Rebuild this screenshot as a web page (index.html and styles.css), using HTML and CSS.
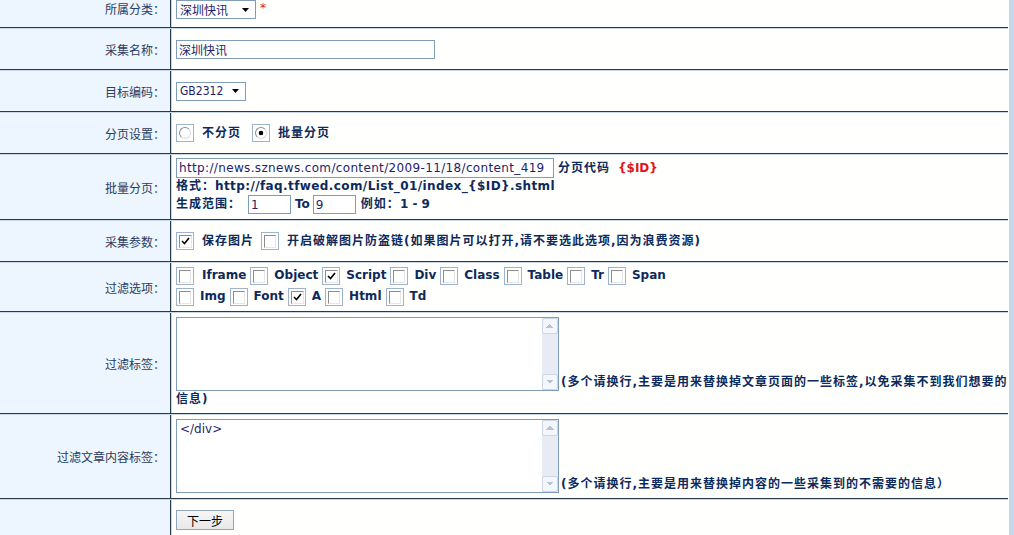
FILE: index.html
```html
<!DOCTYPE html>
<html lang="zh-CN">
<head>
  <meta charset="UTF-8" />
  <title>采集设置</title>
  <link rel="stylesheet" href="styles.css">
</head>
<body>
  <div class="form">
    <div class="row first">
      <div class="label">所属分类：</div>
      <div class="field">
        <span class="select w80"><span class="val">深圳快讯</span><svg class="arrow" width="7" height="4" viewBox="0 0 7 4"><path d="M0 0h7L3.5 4z"/></svg></span>
        <span class="req">*</span>
      </div>
    </div>

    <div class="row">
      <div class="label">采集名称：</div>
      <div class="field">
        <input class="text w259" type="text" value="深圳快讯">
      </div>
    </div>

    <div class="row">
      <div class="label">目标编码：</div>
      <div class="field">
        <span class="select w70"><span class="val latin">GB2312</span><svg class="arrow" width="7" height="4" viewBox="0 0 7 4"><path d="M0 0h7L3.5 4z"/></svg></span>
      </div>
    </div>

    <div class="row">
      <div class="label">分页设置：</div>
      <div class="field wide radios">
        <label class="opt"><span class="box"><i class="radio"></i></span><span class="cn">不分页</span></label>
        <label class="opt"><span class="box"><i class="radio on"></i></span><span class="cn">批量分页</span></label>
      </div>
    </div>

    <div class="row h66">
      <div class="label">批量分页：</div>
      <div class="field stack">
        <div class="line l1">
          <input class="text w378" type="text" value="http://news.sznews.com/content/2009-11/18/content_419">
          <span class="cn">分页代码</span>
          <span class="code">{$ID}</span>
        </div>
        <div class="line l2"><span class="cn">格式：</span><span class="fmt">http://faq.tfwed.com/List_01/index_{$ID}.shtml</span></div>
        <div class="line l3">
          <span class="cn">生成范围：</span>
          <input class="text w43 range" type="text" value="1">
          <span>To</span>
          <input class="text w43" type="text" value="9">
          <span class="eg"><span class="cn">例如：</span>1 - 9</span>
        </div>
      </div>
    </div>

    <div class="row">
      <div class="label">采集参数：</div>
      <div class="field wide">
        <label class="opt"><span class="box"><i class="chk"><svg width="11" height="11" viewBox="0 0 11 11"><path d="M2 5l2.5 2.5L9 2" fill="none" stroke="#000" stroke-width="1.6"/></svg></i></span><span class="cn">保存图片</span></label>
        <label class="opt"><span class="box"><i class="chk"></i></span><span class="cn">开启破解图片防盗链(如果图片可以打开,请不要选此选项,因为浪费资源)</span></label>
      </div>
    </div>

    <div class="row h50">
      <div class="label">过滤选项：</div>
      <div class="field stack tags">
        <div class="line">
          <label class="opt first-opt"><span class="box"><i class="chk"></i></span>Iframe</label>
          <label class="opt"><span class="box"><i class="chk"></i></span>Object</label>
          <label class="opt"><span class="box"><i class="chk"><svg width="11" height="11" viewBox="0 0 11 11"><path d="M2 5l2.5 2.5L9 2" fill="none" stroke="#000" stroke-width="1.6"/></svg></i></span>Script</label>
          <label class="opt"><span class="box"><i class="chk"></i></span>Div</label>
          <label class="opt"><span class="box"><i class="chk"></i></span>Class</label>
          <label class="opt"><span class="box"><i class="chk"></i></span>Table</label>
          <label class="opt"><span class="box"><i class="chk"></i></span>Tr</label>
          <label class="opt"><span class="box"><i class="chk"></i></span>Span</label>
        </div>
        <div class="line">
          <label class="opt"><span class="box"><i class="chk"></i></span>Img</label>
          <label class="opt"><span class="box"><i class="chk"></i></span>Font</label>
          <label class="opt"><span class="box"><i class="chk"><svg width="11" height="11" viewBox="0 0 11 11"><path d="M2 5l2.5 2.5L9 2" fill="none" stroke="#000" stroke-width="1.6"/></svg></i></span>A</label>
          <label class="opt"><span class="box"><i class="chk"></i></span>Html</label>
          <label class="opt"><span class="box"><i class="chk"></i></span>Td</label>
        </div>
      </div>
    </div>

    <div class="row h102">
      <div class="label">过滤标签：</div>
      <div class="field flow">
        <span class="areawrap"><textarea class="area"></textarea><span class="sbar"><i class="up"></i><i class="down"></i></span></span><span class="cn">(多个请换行,主要是用来替换掉文章页面的一些标签,以免采集不到我们想要的信息)</span>
      </div>
    </div>

    <div class="row h85">
      <div class="label">过滤文章内容标签：</div>
      <div class="field flow">
        <span class="areawrap"><textarea class="area">&lt;/div&gt;</textarea><span class="sbar"><i class="up"></i><i class="down"></i></span></span><span class="cn">(多个请换行,主要是用来替换掉内容的一些采集到的不需要的信息）</span>
      </div>
    </div>

    <div class="row last">
      <div class="label"></div>
      <div class="field top">
        <button class="btn" type="button">下一步</button>
      </div>
    </div>
  </div>
</body>
</html>
```

FILE: styles.css
```css
body { margin: 0; background: #c6d7ec; font: 12px "Noto Sans CJK SC", sans-serif; }
.form { width: 1008px; background: #fff; border-right: 1px solid #fff; }

.row { display: grid; grid-template-columns: 171px 1fr; height: 42px; box-sizing: border-box; border-top: 1px solid #c9d7e8; border-bottom: 1px solid #2a3a4e; }
.row.first { height: 28px; border-top: 0; }
.row.h66 { height: 66px; }
.row.h50 { height: 50px; }
.row.h102 { height: 102px; }
.row.h85 { height: 85px; }
.row.last { height: 42px; }

.label { background: #edf5fe; border-right: 1px solid #2a3a4e; color: #2b3c5d; display: flex; align-items: center; justify-content: flex-end; padding-right: 5px; line-height: 17px; }
.first .label { align-items: flex-start; }

.field { display: flex; align-items: center; padding-left: 4px; border-left: 1px solid #c9d7e8; background: #fffffe; color: #0c2a5b; font-family: "DejaVu Sans", "Noto Sans CJK SC", sans-serif; font-weight: bold; line-height: 17px; min-width: 0; }
.first .field { align-items: flex-start; }
.field.stack { display: block; padding-top: 3px; }
.field.flow { display: block; padding-top: 4px; padding-right: 0; }
.field.top { align-items: flex-start; padding-top: 10px; }

.cn { letter-spacing: 1px; }

/* select look-alike */
.select { display: inline-flex; align-items: center; justify-content: space-between; height: 19px; box-sizing: border-box; border: 1px solid #7f9db9; background: #fff; padding: 0 6px 0 3px; color: #1e1c68; font-weight: normal; font-family: "Noto Sans CJK SC", sans-serif; }
.select .val.latin { font-family: "DejaVu Sans Condensed", "DejaVu Sans", sans-serif; }
.select .arrow { fill: #000; }
.w80 { width: 80px; }
.w70 { width: 70px; }
.req { color: #e3141b; font-weight: normal; margin-left: 4px; font-size: 12px; }

/* text inputs */
.text { height: 19px; box-sizing: border-box; margin: 0; border: 1px solid #7f9db9; padding: 0 2px; color: #261d6c; background: #fff; font: 12px "DejaVu Sans", "Noto Sans CJK SC", sans-serif; }
.w259 { width: 259px; font-family: "Noto Sans CJK SC", sans-serif; }
.w378 { width: 378px; height: 20px; letter-spacing: 0.35px; }
.w43 { width: 43px; }

.line { display: flex; align-items: center; height: 19px; white-space: nowrap; }
.line.l1 { height: 20px; }
.line.l1 .cn { margin-left: 4px; }
.line.l2 { height: 17px; }
.fmt { letter-spacing: 0.4px; }
.line.l3 .range { margin-left: 7px; margin-right: 4px; }
.line.l3 .range + span { margin-right: 3px; }
.line.l3 .eg { margin-left: 5px; }
.code { color: #e3141b; margin-left: 8px; }

/* checkboxes and radios */
.opt { display: inline-flex; align-items: center; gap: 6px; margin-right: 4px; }
.wide .opt { gap: 8px; margin-right: 7px; }
.radios .opt { margin-right: 11px; }
.tags .line + .line { margin-top: 2px; }
.tags .first-opt { gap: 8px; }
.box { display: inline-flex; align-items: flex-start; justify-content: flex-start; width: 18px; height: 18px; box-sizing: border-box; border: 1px solid #9fb4cc; padding: 2px; background: #fff; }
.chk { display: flex; align-items: center; justify-content: center; width: 13px; height: 13px; box-sizing: border-box; border-style: solid; border-width: 1px; border-color: #8d8d8d #e6e6e6 #e6e6e6 #8d8d8d; background: #fff; }
.radio { display: block; width: 12px; height: 12px; box-sizing: border-box; border-radius: 50%; border: 1px solid; border-color: #8d8d8d #dedede #dedede #8d8d8d; background: #fff; }
.radio.on { background: radial-gradient(circle, #000 0 2px, #fff 2.6px); }

/* textareas with a classic scrollbar drawn over the right edge */
.areawrap { display: inline-block; position: relative; vertical-align: bottom; margin-right: 2px; }
.area { display: block; width: 383px; height: 74px; box-sizing: border-box; margin: 0; padding: 2px 20px 2px 3px; border: 1px solid #7f9db9; resize: none; overflow: hidden; color: #2a1f6b; font: 12px "DejaVu Sans", sans-serif; background: #fff; }
.sbar { position: absolute; top: 1px; right: 1px; bottom: 1px; width: 16px; background: #e7ecf4; display: flex; flex-direction: column; justify-content: space-between; }
.sbar i { display: block; height: 16px; box-sizing: border-box; border: 1px solid #cdd7e5; border-radius: 2px; background-color: #f3f6fb; background-repeat: no-repeat; background-size: 4px 4px, 4px 4px; background-position: 3px 5px, 7px 5px; }
.sbar .up { background-image: linear-gradient(to bottom right, transparent 50%, #b9c3d1 50%), linear-gradient(to bottom left, transparent 50%, #b9c3d1 50%); }
.sbar .down { background-image: linear-gradient(to top right, transparent 50%, #b9c3d1 50%), linear-gradient(to top left, transparent 50%, #b9c3d1 50%); }

.btn { width: 58px; height: 20px; margin: 0; padding: 0; border: 1px solid #8fa6c0; background: linear-gradient(#f6f6f6, #e9e9e9); color: #000; font: 12px "Noto Sans CJK SC", sans-serif; }
```
